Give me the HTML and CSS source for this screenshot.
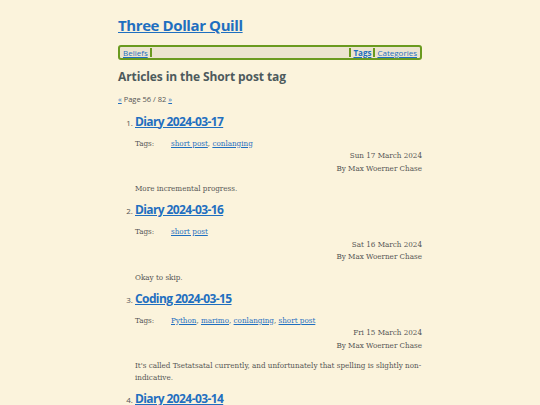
FILE: index.html
```html
<!DOCTYPE html>
<html lang="en">
<head>
  <meta charset="UTF-8" />
  <title>Articles in the Short post tag - Three Dollar Quill</title>
  <meta name="viewport" content="width=device-width, initial-scale=1.0"/>
  <link rel="stylesheet" href="styles.css">
</head>
<body>
  <div class="page">
    <header>
      <h1 class="site-title"><a href="#">Three Dollar Quill</a></h1>
      <nav class="menu">
        <a href="#" class="menu-item">Beliefs</a>
        <span class="menu-gap"></span>
        <a href="#" class="menu-item current">Tags</a>
        <a href="#" class="menu-item">Categories</a>
      </nav>
    </header>

    <main>
      <h2 class="tag-heading">Articles in the Short post tag</h2>
      <p class="pager"><a href="#">«</a> Page 56 / 82 <a href="#">»</a></p>

      <ol class="articles">
        <li class="article">
          <h3 class="article-title"><a href="#">Diary 2024-03-17</a></h3>
          <div class="tags"><span class="tags-label">Tags:</span><span><a href="#">short post</a>, <a href="#">conlanging</a></span></div>
          <div class="meta">
            <div>Sun 17 March 2024</div>
            <div>By Max Woerner Chase</div>
          </div>
          <p class="summary">More incremental progress.</p>
        </li>
        <li class="article">
          <h3 class="article-title"><a href="#">Diary 2024-03-16</a></h3>
          <div class="tags"><span class="tags-label">Tags:</span><span><a href="#">short post</a></span></div>
          <div class="meta">
            <div>Sat 16 March 2024</div>
            <div>By Max Woerner Chase</div>
          </div>
          <p class="summary">Okay to skip.</p>
        </li>
        <li class="article">
          <h3 class="article-title"><a href="#">Coding 2024-03-15</a></h3>
          <div class="tags"><span class="tags-label">Tags:</span><span><a href="#">Python</a>, <a href="#">marimo</a>, <a href="#">conlanging</a>, <a href="#">short post</a></span></div>
          <div class="meta">
            <div>Fri 15 March 2024</div>
            <div>By Max Woerner Chase</div>
          </div>
          <p class="summary">It's called Tsetatsatal currently, and unfortunately that spelling is slightly non-indicative.</p>
        </li>
        <li class="article">
          <h3 class="article-title"><a href="#">Diary 2024-03-14</a></h3>
          <div class="tags"><span class="tags-label">Tags:</span><span><a href="#">short post</a></span></div>
        </li>
      </ol>
    </main>
  </div>
</body>
</html>
```

FILE: styles.css
```css
body {
  margin: 0;
  background: #fbf3dc;
  color: #555;
  font-family: 'DejaVu Serif Condensed', 'DejaVu Serif', serif;
  font-size: 8px;
  line-height: 12.5px;
}

a {
  color: #1f6fc0;
}

.page {
  width: 304px;
  margin: 0 auto;
  padding-top: 14px;
}

.site-title {
  font-family: 'Open Sans', sans-serif;
  font-size: 15px;
  letter-spacing: -0.4px;
  line-height: 22px;
  margin: 0 0 9px;
}

.menu {
  display: flex;
  align-items: stretch;
  border: 2px solid #6a9a1f;
  border-radius: 3px;
  background: #ece4cf;
  padding: 1px 1px;
  font-family: 'Open Sans', sans-serif;
  font-size: 8px;
  line-height: 9px;
}

.menu-item {
  padding: 0 2px;
}

.menu-item:first-child {
  border-right: 2px solid #6a9a1f;
}

.menu-gap {
  flex: 1;
  border-right: 2px solid #6a9a1f;
}

.menu-item.current {
  font-weight: bold;
  border-right: 2px solid #6a9a1f;
}

.tag-heading {
  font-family: 'Open Sans', sans-serif;
  font-size: 12px;
  letter-spacing: -0.1px;
  line-height: 16px;
  color: #4d5a5c;
  margin: 9px 0 0;
}

.pager {
  font-family: 'Open Sans', sans-serif;
  font-size: 7.5px;
  margin: 8px 0 0;
}

.articles {
  margin: 7px 0 0;
  padding-left: 17px;
}

.article::marker {
  font-family: 'Open Sans', sans-serif;
  font-size: 8px;
}

.article-title {
  font-family: 'Open Sans', sans-serif;
  font-size: 12px;
  letter-spacing: -0.6px;
  line-height: 18px;
  margin: 0;
}

.tags {
  display: flex;
  margin-top: 7px;
}

.tags-label {
  width: 36px;
}

.meta {
  text-align: right;
}

.summary {
  line-height: 12px;
  margin: 8px 0 6px;
}
```
